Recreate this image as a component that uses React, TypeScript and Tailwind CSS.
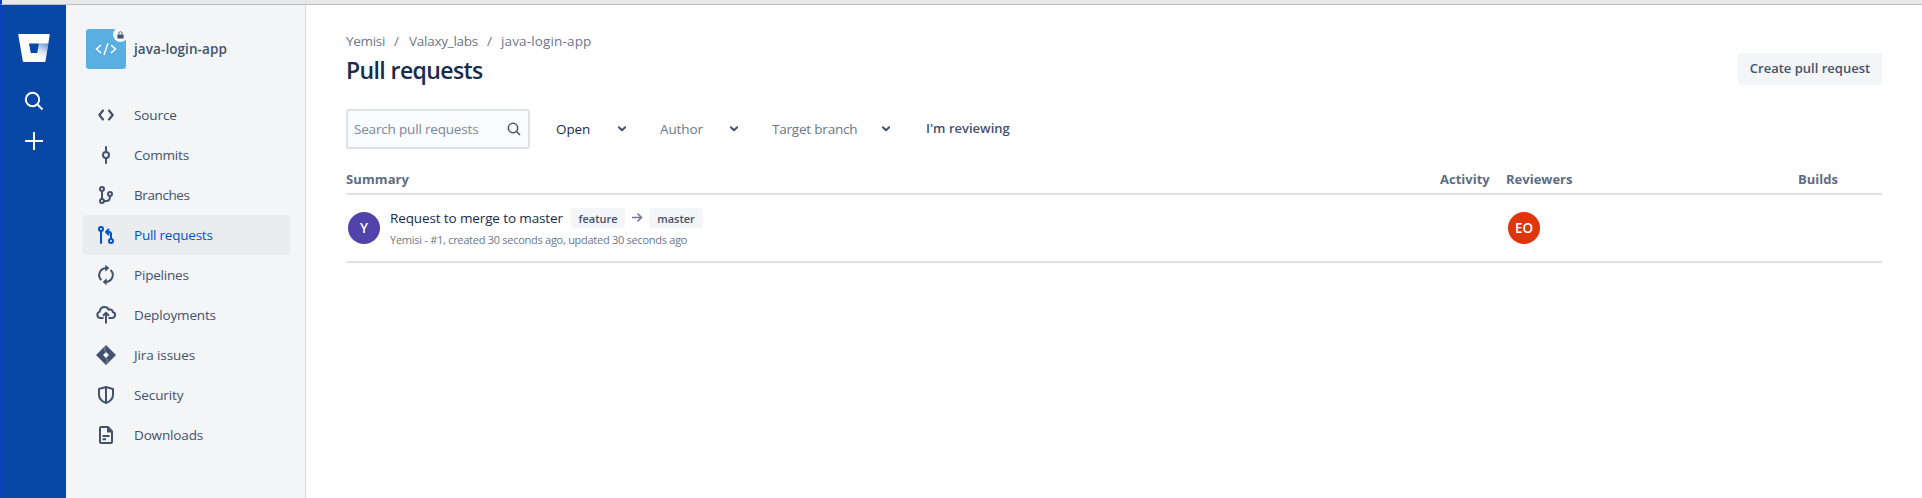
import React from "react";

type IconProps = { children: React.ReactNode; className?: string };

function Icon({ children, className = "size-6" }: IconProps) {
  return (
    <svg viewBox="0 0 24 24" fill="none" stroke="currentColor" strokeWidth="2" className={`${className} shrink-0`}>
      {children}
    </svg>
  );
}

const SourceIcon = () => (
  <Icon>
    <path d="M9 7.500 5.300 12l3.700 4.500M15 7.500l3.700 4.500-3.700 4.500" strokeWidth="2.200" strokeLinecap="round" strokeLinejoin="round" />
  </Icon>
);
const CommitsIcon = () => (
  <Icon>
    <circle cx="12" cy="12" r="3" />
    <path d="M12 4v4M12 16v4" strokeLinecap="round" />
  </Icon>
);
const BranchesIcon = () => (
  <Icon>
    <circle cx="8" cy="6" r="2" />
    <circle cx="8" cy="18" r="2" />
    <circle cx="16" cy="11" r="2" />
    <path d="M8 8v8M10 18h2.500q3.500 0 3.500-5" />
  </Icon>
);
const PullRequestsIcon = () => (
  <Icon>
    <circle cx="7" cy="6" r="2" />
    <circle cx="17" cy="18" r="2" />
    <path d="M7 8v12" strokeLinecap="round" />
    <path d="M12 9h3q2 0 2 2v5M14.500 6.500 12 9l2.500 2.500" strokeLinejoin="round" strokeLinecap="round" />
  </Icon>
);
const PipelinesIcon = () => (
  <Icon>
    <path d="M13.500 5.200H12a6.800 6.800 0 0 0-4.600 11.800M10.500 18.800H12a6.800 6.800 0 0 0 4.600-11.800" />
    <path d="m11.300 1.800 4 3.200-4 3.700ZM12.700 15.300l-4 3.700 4 3.200Z" fill="currentColor" stroke="none" />
  </Icon>
);
const DeploymentsIcon = () => (
  <Icon>
    <path d="M9.500 15H6a3.300 3.300 0 0 1-.3-6.400C6.200 5.500 8.300 4 10.500 4c2 0 3.500 1 4.300 2.700 2.500-.6 3.700.3 4 2.300 3.500 1 2.700 6-.8 6h-3.500" />
    <path d="M12 20.500V11M9 12.800l3-3 3 3" />
  </Icon>
);
const JiraIcon = () => (
  <Icon>
    <path d="M12 2 22 12 12 22 2 12Zm0 7-3 3 3 3 3-3Z" fill="currentColor" fillRule="evenodd" stroke="none" />
    <path d="M12 3.500c-2 2.200-1.500 4 0 5.500M12 20.500c2-2.200 1.500-4 0-5.500" stroke="#8993a4" strokeWidth="1" />
  </Icon>
);
const SecurityIcon = () => (
  <Icon>
    <path d="M12 4 19 6v5.500c0 4.500-3 7-7 8.500-4-1.500-7-4-7-8.500V6ZM12 4v16" strokeLinejoin="round" />
  </Icon>
);
const DownloadsIcon = () => (
  <Icon>
    <path d="M14 4H7a1 1 0 0 0-1 1v14a1 1 0 0 0 1 1h10a1 1 0 0 0 1-1V8.500ZM8.500 13h7M8.500 16.300H12" />
    <path d="M13 4v5.500h6Z" fill="currentColor" stroke="none" />
  </Icon>
);

const navItems = [
  { label: "Source", icon: SourceIcon, tracking: "tracking-[-0.1px]" },
  { label: "Commits", icon: CommitsIcon, tracking: "tracking-[-0.2px]" },
  { label: "Branches", icon: BranchesIcon, tracking: "tracking-[-0.4px]" },
  { label: "Pull requests", icon: PullRequestsIcon, active: true, tracking: "tracking-[-0.23px]" },
  { label: "Pipelines", icon: PipelinesIcon, tracking: "tracking-[-0.2px]" },
  { label: "Deployments", icon: DeploymentsIcon, tracking: "tracking-[-0.15px]" },
  { label: "Jira issues", icon: JiraIcon, tracking: "tracking-[-0.1px]" },
  { label: "Security", icon: SecurityIcon, tracking: "tracking-[-0.1px]" },
  { label: "Downloads", icon: DownloadsIcon, tracking: "tracking-[-0.15px]" },
];

function GlobalRail() {
  return (
    <nav className="flex w-[66px] shrink-0 flex-col items-center border-l-2 border-[#0a3fc4] bg-[#0747a6] pt-[29px] text-white">
      <svg viewBox="0 0 32 28" className="h-7 w-8">
        <defs>
          <linearGradient id="fold" gradientUnits="userSpaceOnUse" x1="25" y1="8" x2="17" y2="25">
            <stop offset="0" stopColor="#0747a6" stopOpacity="0.6" />
            <stop offset="1" stopColor="#ffffff" stopOpacity="0" />
          </linearGradient>
        </defs>
        <path d="M1 0h30q.8 0 .7 1L27.500 27q-.1 1-1 1H6q-1 0-1.200-1L.3 1Q.200 0 1 0Zm10 9.500 1.800 9.500h6.500L21 9.500Z" fill="#fff" fillRule="evenodd" />
        <path d="M21 9.500h9.300L27.500 27l-1 1H7l5.800-9h6.500Z" fill="url(#fold)" />
      </svg>
      <svg viewBox="0 0 24 24" className="mt-[27px] size-6" fill="none" stroke="currentColor" strokeWidth="2">
        <circle cx="10.500" cy="10.500" r="6.700" />
        <path d="m15.500 15.500 5 5" />
      </svg>
      <svg viewBox="0 0 24 24" className="mt-4 size-6" fill="none" stroke="currentColor" strokeWidth="2">
        <path d="M12 3v18M3 12h18" />
      </svg>
    </nav>
  );
}

function Sidebar() {
  return (
    <aside className="w-[240px] shrink-0 border-r border-[#d5d7db] bg-[#f4f5f7] pt-6">
      <div className="flex items-center gap-2 pl-5">
        <div className="relative flex size-10 items-center justify-center rounded-[3px] bg-[#59afe1] text-white">
          <svg viewBox="0 0 24 14" className="h-3.5 w-6" fill="none" stroke="currentColor" strokeWidth="1.500">
            <path d="M7 3 2.500 7 7 11M17 3l4.500 4L17 11M14 1l-4 12" />
          </svg>
          <span className="absolute -top-0.5 -right-0.5 flex size-[15px] items-center justify-center rounded-full bg-[#f4f5f7] text-[#42526e]">
            <svg viewBox="0 0 8 9" className="h-2 w-[7px]">
              <path d="M.5 4h7v4.500h-7Z" fill="currentColor" />
              <path d="M2.200 4V2.500a1.800 1.800 0 0 1 3.600 0V4" fill="none" stroke="currentColor" />
            </svg>
          </span>
        </div>
        <span className="text-[13.5px] font-semibold tracking-[0.08px] text-[#42526e]">java-login-app</span>
      </div>
      <ul className="mt-[26px] px-4">
        {navItems.map(({ label, icon: ItemIcon, active, tracking }) => (
          <li
            key={label}
            className={`flex h-10 w-52 items-center gap-4 rounded-[3px] pl-3 text-[13.5px] ${tracking} ${
              active ? "bg-[#ebecf0] text-[#0052cc]" : "text-[#42526e]"
            }`}
          >
            <ItemIcon />
            {label}
          </li>
        ))}
      </ul>
    </aside>
  );
}

function Chevron() {
  return (
    <svg viewBox="0 0 8 6" className="h-1.5 w-2 text-[#42526e]" fill="none" stroke="currentColor" strokeWidth="2">
      <path d="m.8 1.200 3.200 3 3.200-3" strokeLinecap="round" strokeLinejoin="round" />
    </svg>
  );
}

function Filters() {
  return (
    <div className="mt-[22px] flex h-10 items-center text-[13.5px]">
      <div className="flex h-10 w-[184px] items-center justify-between rounded-[3px] border-2 border-[#dfe1e6] bg-[#fafbfc] pr-1.5 pl-1.5 text-[#7a869a]">
        <span className="tracking-[-0.18px]">Search pull requests</span>
        <svg viewBox="0 0 16 16" className="size-4 text-[#42526e]" fill="none" stroke="currentColor" strokeWidth="1.500">
          <circle cx="7" cy="7" r="4.700" />
          <path d="m10.300 10.300 3.700 3.700" />
        </svg>
      </div>
      <div className="ml-[26px] flex w-[70px] items-center justify-between text-[#172b4d]">
        <span className="tracking-[-0.1px]">Open</span>
        <Chevron />
      </div>
      <div className="ml-[34px] flex w-[78px] items-center justify-between text-[#6b778c]">
        <span className="tracking-[-0.1px]">Author</span>
        <Chevron />
      </div>
      <div className="ml-[34px] flex w-[118px] items-center justify-between text-[#6b778c]">
        <span className="tracking-[-0.2px]">Target branch</span>
        <Chevron />
      </div>
      <span className="ml-9 text-[13px] font-semibold text-[#42526e]">I'm reviewing</span>
    </div>
  );
}

function BranchLozenge({ children }: { children: React.ReactNode }) {
  return (
    <span className="flex h-5 w-[54px] items-center justify-center rounded-[3px] bg-[#f4f5f7] pt-0.5 text-[11px] font-semibold text-[#42526e]">
      {children}
    </span>
  );
}

function PullRequestTable() {
  return (
    <div>
      <div className="mt-[18px] grid h-7 grid-cols-[1094px_66px_292px_1fr] border-b-2 border-[#dfe1e6] text-[13px] leading-6 font-bold text-[#5e6c84]">
        <span className="tracking-[0.1px]">Summary</span>
        <span>Activity</span>
        <span>Reviewers</span>
        <span>Builds</span>
      </div>
      <div className="grid h-[68px] grid-cols-[1094px_66px_292px_1fr] items-center border-b-2 border-[#dfe1e6]">
        <div className="flex items-center gap-2.5 pl-0.5">
          <span className="flex size-8 items-center justify-center rounded-full bg-[#5243aa] text-[13.5px] font-semibold text-white">Y</span>
          <div>
            <div className="flex h-5 items-center">
              <span className="w-[181px] whitespace-nowrap text-[13.5px] tracking-[-0.12px] text-[#172b4d]">Request to merge to master</span>
              <BranchLozenge>feature</BranchLozenge>
              <svg viewBox="0 0 12 12" className="mx-1.5 size-3 text-[#6b778c]" fill="none" stroke="currentColor" strokeWidth="1.500">
                <path d="M1 5.500h9M6.500 1.500l4 4-4 4" />
              </svg>
              <BranchLozenge>master</BranchLozenge>
            </div>
            <div className="mt-0.5 -mb-0.5 text-[11px] leading-5 tracking-[-0.27px] text-[#6b778c]">
              Yemisi - #1, created 30 seconds ago, updated 30 seconds ago
            </div>
          </div>
        </div>
        <span />
        <span className="ml-0.5 flex size-8 items-center justify-center rounded-full bg-[#de350b] text-[13.5px] font-semibold text-white">EO</span>
      </div>
    </div>
  );
}

export default function App() {
  return (
    <div className="flex h-[498px] w-[1922px] flex-col overflow-hidden bg-white font-['Open_Sans',sans-serif]">
      <div className="h-[5px] w-full shrink-0 border-b border-l-2 border-b-[#bdbdbd] border-l-[#0a3fc4] bg-[#e8e8e8]" />
      <div className="flex flex-1">
        <GlobalRail />
        <Sidebar />
        <main className="w-[1616px] pl-10">
          <div className="w-[1536px]">
            <header className="flex h-[82px] justify-between">
              <div className="pt-[26px]">
                <div className="flex h-5 items-center text-[13.5px] text-[#6b778c]">
                  <span className="w-12 tracking-[-0.3px]">Yemisi</span>
                  <span className="w-[15px]">/</span>
                  <span className="w-[78px] tracking-[-0.25px]">Valaxy_labs</span>
                  <span className="w-[14px]">/</span>
                  <span className="tracking-[0.15px]">java-login-app</span>
                </div>
                <h1 className="mt-[5px] text-[23px] leading-7 font-semibold tracking-[-0.6px] text-[#172b4d]">Pull requests</h1>
              </div>
              <button className="mt-12 h-8 w-36 rounded-[3px] bg-[#f4f5f7] text-[13px] font-semibold text-[#42526e]">Create pull request</button>
            </header>
            <Filters />
            <PullRequestTable />
          </div>
        </main>
      </div>
    </div>
  );
}
